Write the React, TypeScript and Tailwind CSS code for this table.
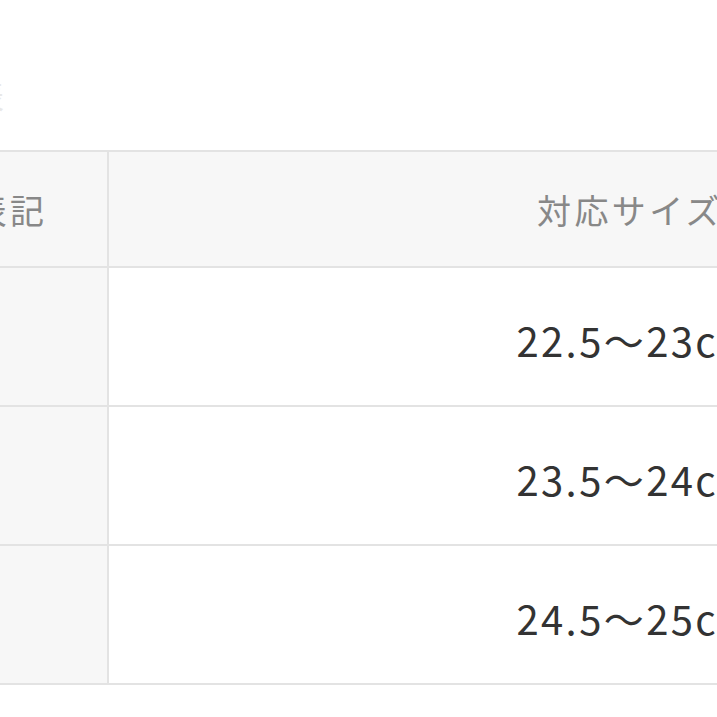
import React from "react";

const rows = [
  { label: "S", size: "22.5～23cm" },
  { label: "M", size: "23.5～24cm" },
  { label: "L", size: "24.5～25cm" },
];

export default function App() {
  return (
    <div
      className="w-[717px] h-[717px] overflow-hidden bg-white"
      style={{ fontFamily: '"Noto Sans CJK JP", "Noto Sans", sans-serif' }}
    >
      <div className="ml-[-198px] w-[1349px]">
        <div className="h-[150px] pt-[78px]">
          <div className="ml-[75px] text-[32px] leading-none text-[#e8e8e8]">サイズ表</div>
        </div>
        <div className="border-t-2 border-[#e3e3e3]">
          <div className="flex h-[116px] border-b-2 border-[#e3e3e3]">
            <div className="w-[307px] bg-[#f7f7f7] border-r-2 border-[#e3e3e3] flex items-center justify-center text-[34px] text-[#888] tracking-[0.1em]">
              サイズ表記
            </div>
            <div className="flex-1 bg-[#f7f7f7] flex items-center justify-center text-[34px] text-[#888] tracking-[0.1em]">
              対応サイズ
            </div>
          </div>
          {rows.map((r) => (
            <div key={r.label} className="flex h-[139px] border-b-2 border-[#e3e3e3]">
              <div className="w-[307px] bg-[#f7f7f7] border-r-2 border-[#e3e3e3] flex items-center justify-center text-[36px] text-[#333]">
                {r.label}
              </div>
              <div className="flex-1 bg-white flex items-center justify-center text-[40px] text-[#333] tracking-[0.06em] pt-[6px] pl-[14px]">
                {r.size}
              </div>
            </div>
          ))}
        </div>
      </div>
    </div>
  );
}
